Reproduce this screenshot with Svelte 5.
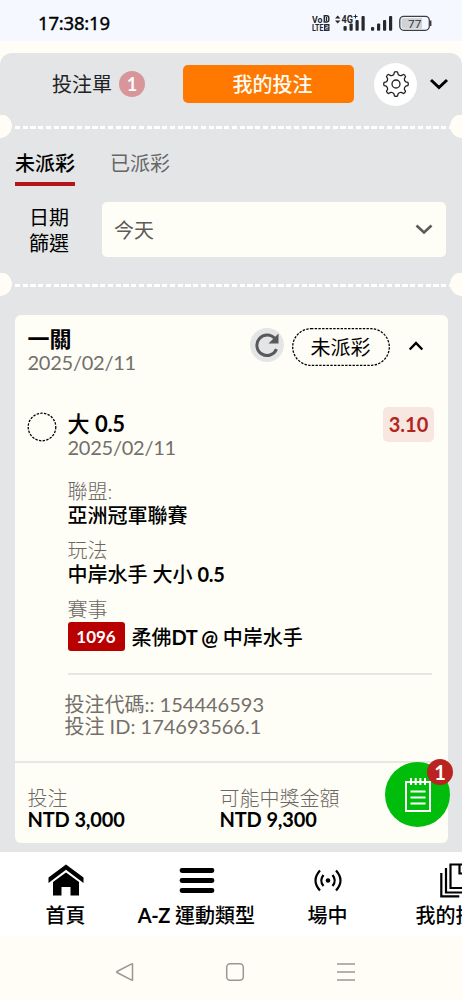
<script lang="ts">
	const tabs = [
		{ label: '未派彩', active: true },
		{ label: '已派彩', active: false }
	];

	const totals = [
		{ label: '投注', value: 'NTD 3,000' },
		{ label: '可能中獎金額', value: 'NTD 9,300' }
	];

	const nav = [
		{ icon: 'home', latin: '', label: '首頁' },
		{ icon: 'menu', latin: 'A-Z', label: ' 運動類型' },
		{ icon: 'live', latin: '', label: '場中' },
		{ icon: 'bets', latin: '', label: '我的投注' }
	];

	// gear outline: eight rounded teeth, alternating outer and inner radius
	const teeth = 8;
	const point = (r: number, a: number) =>
		`${(15 + r * Math.cos(a)).toFixed(2)} ${(15 + r * Math.sin(a)).toFixed(2)}`;
	let gear = '';
	for (let i = 0; i < teeth; i++) {
		const a = (i * 2 * Math.PI) / teeth - Math.PI / 2;
		gear += `${i ? 'L' : 'M'}${point(9.9, a - 0.22)} L${point(12, a - 0.13)} Q${point(12.8, a)} ${point(12, a + 0.13)} L${point(9.9, a + 0.22)} Q${point(8.8, a + 0.39)} ${point(9.9, a + 0.565)} `;
	}
	gear += 'Z';
</script>

<div class="phone">
	<header class="status">
		<span class="time">17:38:19</span>
		<svg class="signals" width="122" height="20" viewBox="0 0 122 20">
			<g fill="#25282c" font-family="Roboto, sans-serif" font-weight="700">
				<text x="0" y="9.5" font-size="9.5" textLength="10.5" lengthAdjust="spacingAndGlyphs">Vo</text>
				<text x="0" y="18" font-size="9.5" textLength="11.5" lengthAdjust="spacingAndGlyphs">LTE</text>
				<path d="M12.3 2.700h2.500q2 0 2 2v2.300q0 2-2 2h-2.500zM14.500 4v4" fill="none" stroke="#25282c" stroke-width="1.400" />
				<rect x="12" y="11" width="5.500" height="7" rx="0.500" />
				<path d="M13.300 12.800h2.700v1.700h-2.300v1.700h2.700" fill="none" stroke="#f5f8ff" stroke-width="0.700" />
				<text x="29.500" y="10" font-size="11" textLength="11.500" lengthAdjust="spacingAndGlyphs">4G</text>
				<path d="M41.500 3.500h4M43.500 1.500v4" stroke="#25282c" stroke-width="1" />
				<path d="M23 5.500l2.700-3 2.700 3zM23 7.500h5.400l-2.700 3z" />
				<rect x="31.500" y="13" width="3.200" height="4.700" rx="1" />
				<rect x="37.500" y="10.500" width="3.200" height="7.200" rx="1" />
				<rect x="43.500" y="7" width="3.200" height="10.700" rx="1" />
				<rect x="49.500" y="3" width="3.200" height="14.700" rx="1" />
				<rect x="59" y="14" width="3.200" height="3.700" rx="1" />
				<rect x="65" y="10.500" width="3.200" height="7.200" rx="1" />
				<rect x="71" y="7" width="3.200" height="10.700" rx="1" />
				<rect x="77" y="3" width="3.200" height="14.700" rx="1" />
			</g>
			<rect x="87.800" y="3.300" width="29.500" height="14" rx="4" fill="none" stroke="#3c3f42" stroke-width="1.300" />
			<path d="M91.500 5h18.500v10.700H91.500a2 2 0 0 1-2-2V7a2 2 0 0 1 2-2z" fill="#d0d2d6" />
			<path d="M118.700 7.500v5.500" stroke="#3c3f42" stroke-width="1.500" />
			<text x="96" y="14.500" font-size="11.800" fill="#333" font-family="Roboto, sans-serif" textLength="13.500">77</text>
		</svg>
	</header>

	<main class="panel">
		<div class="top">
			<button class="slip">投注單<span class="count">1</span></button>
			<button class="mine">我的投注</button>
			<button class="gear" aria-label="設定">
				<svg width="30" height="30" viewBox="0 0 30 30" fill="none" stroke="#222" stroke-width="1.300">
					<path d={gear} stroke-linejoin="round" />
					<circle cx="15" cy="15" r="4" />
				</svg>
			</button>
			<svg class="collapse" width="20" height="12" viewBox="0 0 20 12" fill="none" stroke="#000" stroke-width="3">
				<path d="M2 2l8 7.500L18 2" />
			</svg>
		</div>

		<div class="perforation"></div>

		<div class="tabs">
			{#each tabs as tab (tab.label)}
				<span class="tab" class:active={tab.active}>{tab.label}</span>
			{/each}
		</div>

		<div class="filter">
			<span class="filter-label">日期<br />篩選</span>
			<div class="select">
				今天
				<svg width="18" height="11" viewBox="0 0 18 11" fill="none" stroke="#5d5a57" stroke-width="2.600">
					<path d="M1.500 1.500L9 8.500l7.500-7" />
				</svg>
			</div>
		</div>

		<div class="perforation"></div>

		<article class="card">
			<div class="card-head">
				<div class="heading">
					<h2>一關</h2>
					<p>2025/02/11</p>
				</div>
				<div class="refresh">
					<svg width="26" height="26" viewBox="0 0 26 26">
						<path d="M22.500 17.200A10.200 10.200 0 1 1 21 6.800" fill="none" stroke="#58595b" stroke-width="3" />
						<path d="M24.500 1.500v10h-10z" fill="#58595b" />
					</svg>
				</div>
				<div class="state">
					<svg width="98" height="38" viewBox="0 0 98 38">
						<rect x="0.700" y="0.700" width="96.600" height="36.600" rx="18.300" />
					</svg>
					<span>未派彩</span>
				</div>
				<svg class="fold" width="16" height="10" viewBox="0 0 16 10" fill="none" stroke="#000" stroke-width="2.500">
					<path d="M1.700 8.500L8 2l6.300 6.500" />
				</svg>
			</div>

			<div class="bet">
				<svg class="ring" width="30" height="30" viewBox="0 0 30 30">
					<circle cx="15" cy="15" r="13.800" />
				</svg>
				<div class="bet-body">
					<div class="pick">
						<div class="heading">
							<h2>大 <b>0.5</b></h2>
							<p>2025/02/11</p>
						</div>
						<span class="odds">3.10</span>
					</div>
					<div class="detail">
						<span>聯盟:</span>
						<strong>亞洲冠軍聯賽</strong>
					</div>
					<div class="detail">
						<span>玩法</span>
						<strong>中岸水手 大小 <b>0.5</b></strong>
					</div>
					<div class="detail">
						<span>賽事</span>
						<div class="match">
							<span class="number">1096</span>
							<strong>柔佛<b>DT @</b> 中岸水手</strong>
						</div>
					</div>
					<div class="codes">
						<p>投注代碼:: 154446593</p>
						<p>投注 ID: 174693566.1</p>
					</div>
				</div>
			</div>

			<div class="totals">
				{#each totals as total (total.label)}
					<div>
						<span>{total.label}</span>
						<strong>{total.value}</strong>
					</div>
				{/each}
			</div>
		</article>
	</main>

	<nav class="bottom">
		{#each nav as item (item.label)}
			<div class="nav-item {item.icon}">
				<svg width="38" height="36" viewBox="0 0 38 36">
					{#if item.icon === 'home'}
						<path d="M1.500 14.500L19 1.500l17.500 13v5.500L19 6.800 1.500 20z" />
						<path d="M19 9.500l13 9.500V32.500h-8.500v-8.500h-9v8.500H6V19z" />
					{:else if item.icon === 'menu'}
						<path d="M4 7.500h30M4 17.500h30M4 27.500h30" stroke="#000" stroke-width="4.800" stroke-linecap="round" />
					{:else if item.icon === 'live'}
						<circle cx="19" cy="17.500" r="2.300" />
						<g fill="none" stroke="#000" stroke-width="2.200">
							<path d="M14.500 12q-4.500 5.500 0 11M23.500 12q4.500 5.500 0 11" />
							<path d="M11 7.500q-9 10 0 20M27 7.500q9 10 0 20" />
						</g>
					{:else}
						<g fill="none" stroke="#000" stroke-width="2.200">
							<path d="M10.500 1.500h14l9 9v14.500h-23zM19.500 1.500v9H33" />
							<path d="M6 5v24.500h23M1.300 10v23.300h18" />
						</g>
					{/if}
				</svg>
				<span>{#if item.latin}<b>{item.latin}</b>{/if}{item.label}</span>
			</div>
		{/each}
	</nav>

	<footer class="system">
		<svg width="20" height="20" viewBox="0 0 20 20">
			<path d="M17.500 2.200v15.600q0 .8-.8.400L2 10.500q-.6-.5 0-1L16.700 1.800q.8-.4.800.4z" />
		</svg>
		<svg width="20" height="20" viewBox="0 0 20 20">
			<rect x="1.700" y="1.700" width="16.600" height="16.600" rx="3.500" />
		</svg>
		<svg width="20" height="20" viewBox="0 0 20 20">
			<path d="M1 2h18M1 10h18M1 18h18" />
		</svg>
	</footer>

	<button class="fab" aria-label="投注單">
		<svg width="28" height="36" viewBox="0 0 28 36" fill="none" stroke="#fff" stroke-width="2">
			<path d="M2 5h24v29H2z" />
			<path d="M7 1v7M11.700 1v7M16.400 1v7M21 1v7" />
			<path d="M6.500 14.500h15M6.500 20.500h15M6.500 26.500h15" />
		</svg>
		<span>1</span>
	</button>
</div>

<style>
	:global(body) {
		background: #fffdf5;
	}

	.phone {
		position: relative;
		display: flex;
		flex-direction: column;
		width: 462px;
		height: 1000px;
		overflow: hidden;
		background: #fffdf5;
		color: #000;
		font: 400 20px/24px Lato, 'Noto Sans CJK TC', sans-serif;
		white-space: nowrap;
	}

	.phone * {
		box-sizing: border-box;
	}

	svg {
		display: block;
		flex: none;
	}

	h2,
	p {
		margin: 0;
	}

	b {
		font-weight: 700;
		letter-spacing: -0.4px;
	}

	button {
		border: 0;
		padding: 0;
		background: none;
		color: inherit;
		font: inherit;
	}

	.status {
		display: flex;
		align-items: center;
		justify-content: space-between;
		height: 41px;
		padding: 5px 28px 0 38px;
		background: #f5f8ff;
	}

	.time {
		font: 400 18.500px/24px 'Noto Sans', sans-serif;
		letter-spacing: -0.2px;
		-webkit-text-stroke: 0.400px #000;
	}

	.panel {
		height: 799px;
		margin-top: 12px;
		border-radius: 12px 12px 0 0;
		background: #e4e5e7;
	}

	.top {
		display: flex;
		align-items: center;
		height: 62px;
		padding-right: 13px;
	}

	.slip {
		display: flex;
		align-items: center;
		gap: 7px;
		width: 183px;
		padding-left: 52px;
		color: #222;
	}

	.count {
		width: 26px;
		height: 26px;
		border-radius: 50%;
		background: #d8969b;
		color: #fff;
		font-size: 18px;
		font-weight: 700;
		line-height: 26px;
		text-align: center;
	}

	.mine {
		width: 171px;
		height: 38px;
		border-radius: 5px;
		background: #ff7900;
		color: #fffdf5;
		font-weight: 500;
		padding-left: 8px;
	}

	.gear {
		display: grid;
		place-items: center;
		width: 43px;
		height: 43px;
		margin: 0 auto 0 20px;
		border-radius: 50%;
		background: #fff;
	}

	.perforation {
		height: 24px;
		background:
			radial-gradient(circle at 0 11px, #fffdf5 11.500px, transparent 12.200px),
			radial-gradient(circle at 462px 11px, #fffdf5 11.500px, transparent 12.200px),
			repeating-linear-gradient(90deg, #fff 0 5px, transparent 5px 7.750px) 15px 11px / 436px 3px
				no-repeat;
	}

	.tabs {
		display: flex;
		gap: 35px;
		height: 63px;
		padding: 12px 15px 0;
	}

	.tab {
		height: 35px;
		color: #666;
	}

	.tab.active {
		border-bottom: 4px solid #b3151b;
		color: #000;
		font-weight: 500;
	}

	.filter {
		display: flex;
		height: 71px;
		padding: 0 16px 0 15px;
	}

	.filter-label {
		width: 87px;
		padding: 2px 19px 0 0;
		line-height: 26px;
		text-align: center;
	}

	.select {
		display: flex;
		align-items: center;
		justify-content: space-between;
		flex: 1;
		height: 55px;
		padding: 0 13px 0 12px;
		border-radius: 5px;
		background: #fffef6;
		color: #5d5a57;
	}

	.card {
		height: 528px;
		margin: 18px 14.500px 0;
		border-radius: 6px;
		background: #fffef6;
	}

	.card-head {
		display: flex;
		align-items: flex-start;
		height: 97px;
		padding: 12px 24px 0 13px;
	}

	.heading h2 {
		font-size: 22px;
		font-weight: 700;
		line-height: 24px;
	}

	.heading p {
		margin-top: -1px;
		color: #736f6c;
		letter-spacing: -0.250px;
	}

	.refresh {
		display: grid;
		place-items: center;
		width: 34px;
		height: 34px;
		margin: 1px 8px 0 auto;
		border-radius: 50%;
		background: #e4e5e7;
	}

	.state {
		display: grid;
		place-items: center;
		margin: 1px 18px 0 0;
	}

	.state > * {
		grid-area: 1 / 1;
	}

	.state rect,
	.ring circle {
		fill: none;
		stroke: #000;
		stroke-width: 1.300;
		stroke-dasharray: 2.400 1.300;
	}

	.fold {
		margin-top: 14px;
	}

	.bet {
		display: flex;
		gap: 10.500px;
		height: 351px;
		padding: 0 13.500px 0 12.500px;
		border-bottom: 2px solid #eae6e1;
	}

	.bet-body {
		flex: 1;
	}

	.pick {
		display: flex;
		justify-content: space-between;
		height: 67px;
	}

	.pick h2 {
		font-weight: 500;
	}

	.odds {
		width: 51px;
		height: 35px;
		margin-top: -5px;
		border-radius: 5px;
		background: #f8e6e0;
		color: #b3261e;
		font-weight: 700;
		line-height: 35px;
		text-align: center;
	}

	.detail {
		display: flex;
		flex-direction: column;
		margin-bottom: 11px;
		color: #6b6764;
		font-weight: 300;
	}

	.detail strong {
		color: #000;
		font-weight: 500;
	}

	.match {
		display: flex;
		align-items: center;
		gap: 7px;
		height: 29px;
		margin-top: 1px;
	}

	.number {
		width: 57px;
		height: 29px;
		border-radius: 3px;
		background: #b80000;
		color: #fff;
		font-size: 17px;
		font-weight: 700;
		line-height: 29px;
		text-align: center;
	}

	.codes {
		margin: 22px 2px 0 0;
		padding-top: 18px;
		border-top: 2px solid #e9e5e0;
		color: #736f6c;
		line-height: 22px;
	}

	.codes p {
		margin-left: -3px;
	}

	.totals {
		display: grid;
		grid-template-columns: 192px 1fr;
		padding: 24px 13px 0;
		line-height: 22px;
	}

	.totals div {
		display: flex;
		flex-direction: column;
	}

	.totals span {
		color: #6b6764;
		font-weight: 300;
	}

	.totals strong {
		margin-top: -1px;
		letter-spacing: -0.150px;
	}

	.bottom {
		display: flex;
		height: 84px;
		background: #fff;
	}

	.nav-item {
		display: flex;
		flex: none;
		flex-direction: column;
		align-items: center;
		width: 131px;
		padding-top: 11px;
		font-weight: 500;
	}

	.nav-item span {
		margin-top: 4px;
	}

	.nav-item.bets span {
		margin-right: 6px;
	}

	.system {
		display: flex;
		gap: 90.500px;
		height: 64px;
		padding: 26px 0 0 114.500px;
	}

	.system svg {
		fill: none;
		stroke: #9b9894;
		stroke-width: 1.500;
	}

	/* floats over the card and the panel edge */
	.fab {
		position: absolute;
		top: 762px;
		left: 385px;
		display: grid;
		place-items: center;
		width: 65px;
		height: 65px;
		border-radius: 50%;
		background: #00bd0b;
	}

	.fab span {
		position: absolute;
		top: -3px;
		right: -3px;
		width: 26px;
		height: 26px;
		border-radius: 50%;
		background: #ba231f;
		color: #fff;
		font-weight: 700;
		line-height: 26px;
	}
</style>
